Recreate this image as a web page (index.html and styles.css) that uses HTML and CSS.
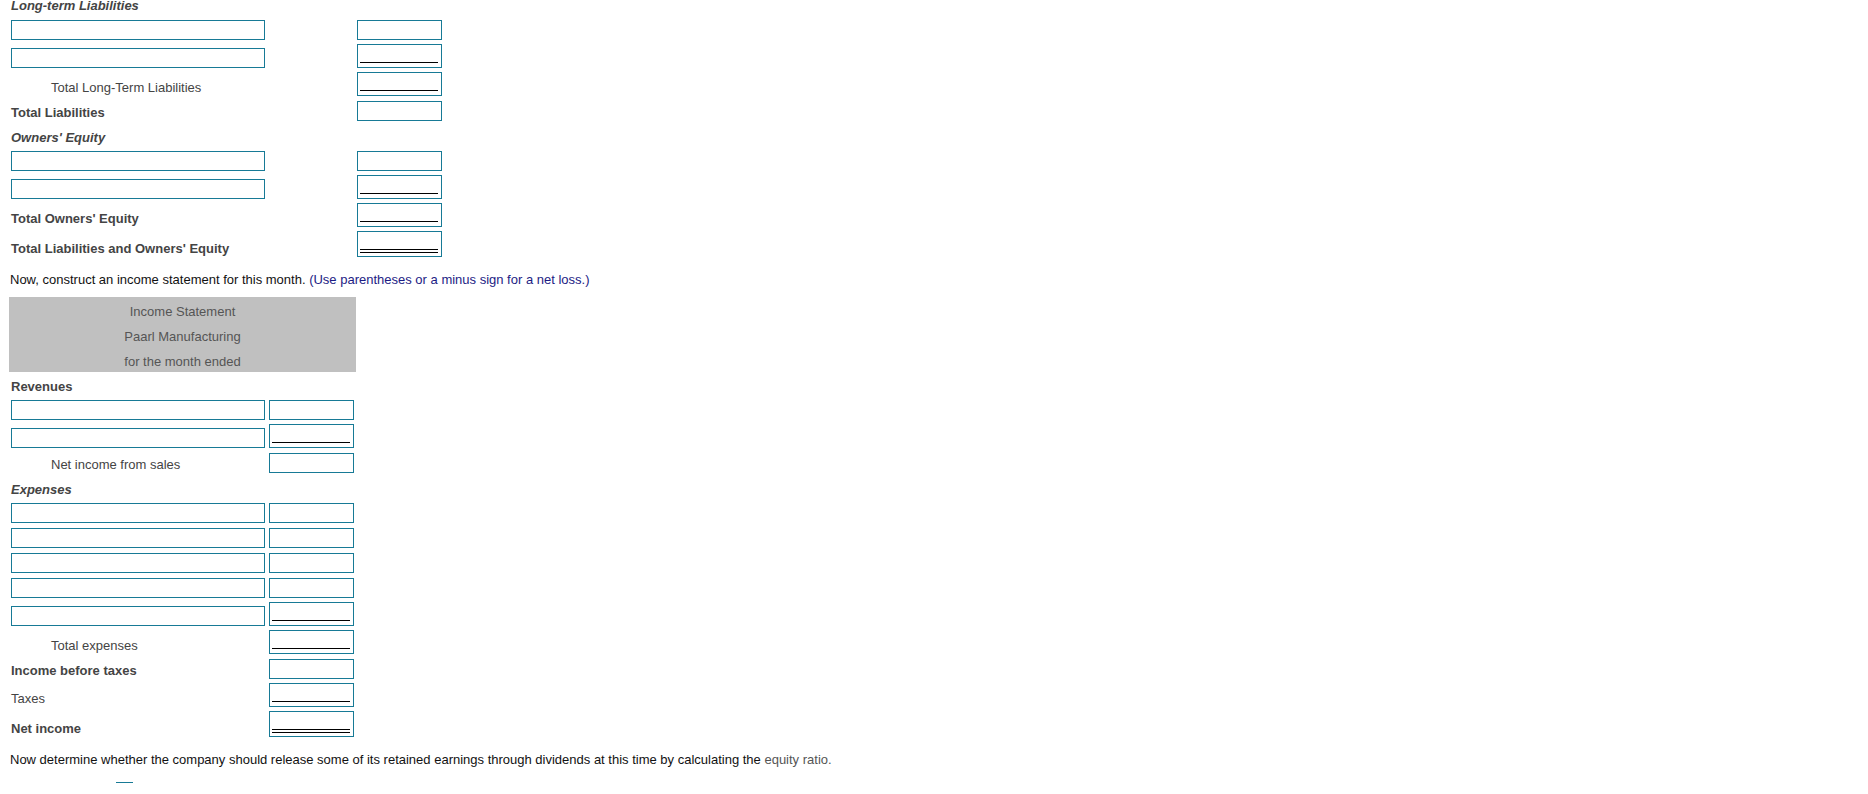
FILE: index.html
```html
<!DOCTYPE html>
<html lang="en">
<head>
    <meta charset="UTF-8">
    <meta name="viewport" content="width=device-width, initial-scale=1.0">
    <title>Financial Statements</title>
    <link rel="stylesheet" href="styles.css">
</head>
<body>
    <div class="sheet balance">
        <div class="group-title">Long-term Liabilities</div>

        <div class="row gap7">
            <div class="desc"><input class="field" type="text"></div>
            <label class="amt"><input type="text"></label>
        </div>
        <div class="row">
            <div class="desc"><input class="field" type="text"></div>
            <label class="amt sub"><input type="text"></label>
        </div>
        <div class="row">
            <div class="desc"><span class="label indent">Total Long-Term Liabilities</span></div>
            <label class="amt sub"><input type="text"></label>
        </div>
        <div class="row gap5">
            <div class="desc"><span class="label bold">Total Liabilities</span></div>
            <label class="amt"><input type="text"></label>
        </div>

        <div class="group-title gap9">Owners' Equity</div>

        <div class="row gap6">
            <div class="desc"><input class="field" type="text"></div>
            <label class="amt"><input type="text"></label>
        </div>
        <div class="row">
            <div class="desc"><input class="field" type="text"></div>
            <label class="amt sub"><input type="text"></label>
        </div>
        <div class="row">
            <div class="desc"><span class="label bold">Total Owners' Equity</span></div>
            <label class="amt sub"><input type="text"></label>
        </div>
        <div class="row">
            <div class="desc"><span class="label bold">Total Liabilities and Owners' Equity</span></div>
            <label class="amt dbl"><input type="text"></label>
        </div>
    </div>

    <p class="prompt">Now, construct an income statement for this month. <span class="hint">(Use parentheses or a minus sign for a net loss.)</span></p>

    <div class="sheet income">
        <div class="statement-head">
            <div>Income Statement</div>
            <div>Paarl Manufacturing</div>
            <div>for the month ended</div>
        </div>

        <div class="group-title plain gap7">Revenues</div>

        <div class="row gap5">
            <div class="desc"><input class="field" type="text"></div>
            <label class="amt"><input type="text"></label>
        </div>
        <div class="row">
            <div class="desc"><input class="field" type="text"></div>
            <label class="amt sub"><input type="text"></label>
        </div>
        <div class="row gap5">
            <div class="desc"><span class="label indent">Net income from sales</span></div>
            <label class="amt"><input type="text"></label>
        </div>

        <div class="group-title gap9">Expenses</div>

        <div class="row gap5">
            <div class="desc"><input class="field" type="text"></div>
            <label class="amt"><input type="text"></label>
        </div>
        <div class="row gap5">
            <div class="desc"><input class="field" type="text"></div>
            <label class="amt"><input type="text"></label>
        </div>
        <div class="row gap5">
            <div class="desc"><input class="field" type="text"></div>
            <label class="amt"><input type="text"></label>
        </div>
        <div class="row gap5">
            <div class="desc"><input class="field" type="text"></div>
            <label class="amt"><input type="text"></label>
        </div>
        <div class="row">
            <div class="desc"><input class="field" type="text"></div>
            <label class="amt sub"><input type="text"></label>
        </div>
        <div class="row">
            <div class="desc"><span class="label indent">Total expenses</span></div>
            <label class="amt sub"><input type="text"></label>
        </div>
        <div class="row gap5">
            <div class="desc"><span class="label bold">Income before taxes</span></div>
            <label class="amt"><input type="text"></label>
        </div>
        <div class="row">
            <div class="desc"><span class="label">Taxes</span></div>
            <label class="amt sub"><input type="text"></label>
        </div>
        <div class="row">
            <div class="desc"><span class="label bold">Net income</span></div>
            <label class="amt dbl"><input type="text"></label>
        </div>
    </div>

    <p class="prompt">Now determine whether the company should release some of its retained earnings through dividends at this time by calculating the <span class="term">equity ratio.</span></p>

    <div class="answer-line"></div>
</body>
</html>
```

FILE: styles.css
```css
html {
    background: #fff;
}

body {
    margin: 0;
    padding: 0 0 0 9px;
    font-family: "Liberation Sans", Arial, sans-serif;
    font-size: 13px;
    color: #444;
    overflow: hidden;
}

.sheet.balance {
    margin-top: -2px;
}

.row {
    display: flex;
    align-items: flex-end;
    margin-top: 4px;
}

.gap5 { margin-top: 5px; }
.gap6 { margin-top: 6px; }
.gap7 { margin-top: 7px; }
.gap9 { margin-top: 9px; }

.balance .desc {
    width: 348px;
}

.income .desc {
    width: 260px;
}

.group-title {
    padding-left: 2px;
    font-weight: bold;
    font-style: italic;
    line-height: 15px;
}

.group-title.plain {
    font-style: normal;
    line-height: 16px;
}

.income .group-title {
    line-height: 16px;
}

.label {
    display: block;
    padding-left: 2px;
    line-height: 17px;
    white-space: nowrap;
}

.label.indent {
    padding-left: 42px;
}

.label.bold {
    font-weight: bold;
}

.field {
    display: block;
    box-sizing: border-box;
    width: 254px;
    height: 20px;
    margin: 0 0 0 2px;
    padding: 0 3px;
    border: 1px solid #177a96;
    border-radius: 0;
    font: inherit;
    background: #fff;
    outline: none;
}

.amt {
    display: block;
    box-sizing: border-box;
    width: 85px;
    height: 20px;
    padding: 0 3px 0 2px;
    border: 1px solid #177a96;
    background: #fff;
}

.amt input {
    display: block;
    box-sizing: border-box;
    width: 100%;
    height: 18px;
    margin: 0;
    padding: 0;
    border: 0;
    font: inherit;
    text-align: right;
    background: transparent;
    outline: none;
}

.amt.sub {
    height: 24px;
    padding-bottom: 4px;
}

.amt.sub input {
    border-bottom: 1px solid #000;
}

.amt.dbl {
    height: 26px;
    padding-bottom: 3px;
}

.amt.dbl input {
    height: 21px;
    border-bottom: 4px double #000;
}

.prompt {
    margin: 15px 0 0 1px;
    line-height: 16px;
    color: #111;
    white-space: nowrap;
}

.hint {
    color: #1c1c84;
}

.term {
    color: #555;
}

.statement-head {
    box-sizing: border-box;
    width: 347px;
    height: 75px;
    margin-top: 9px;
    padding-top: 2px;
    background: #c0c0c0;
    color: #555;
    text-align: center;
    line-height: 25px;
    overflow: hidden;
}

.answer-line {
    width: 17px;
    margin: 14px 0 0 107px;
    border-top: 1px solid #177a96;
}
```
